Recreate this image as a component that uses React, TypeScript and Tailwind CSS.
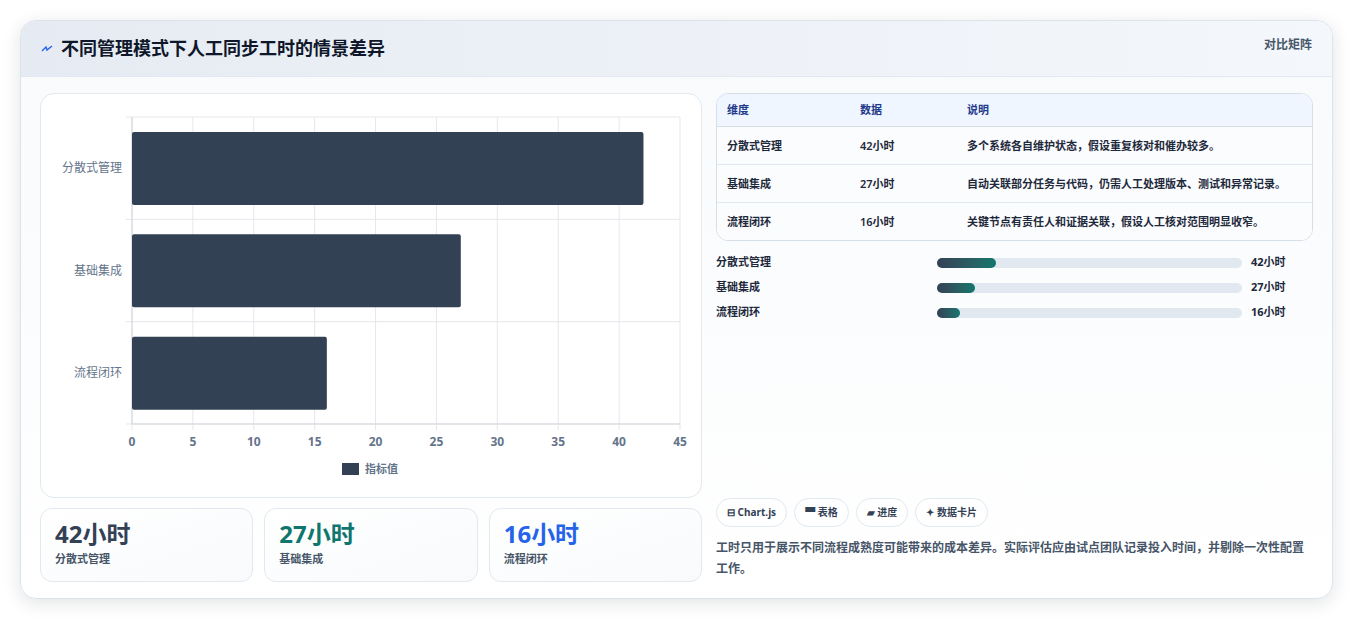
import React from "react";

const cats = [
  { name: "分散式管理", v: 42, desc: "多个系统各自维护状态，假设重复核对和催办较多。", w: 59 },
  { name: "基础集成", v: 27, desc: "自动关联部分任务与代码，仍需人工处理版本、测试和异常记录。", w: 38 },
  { name: "流程闭环", v: 16, desc: "关键节点有责任人和证据关联，假设人工核对范围明显收窄。", w: 23 },
];

function Chart() {
  const x0 = 91, x1 = 639, y0 = 23, y1 = 330;
  const sx = (x1 - x0) / 45;
  const band = (y1 - y0) / 3;
  return (
    <svg width="660" height="402" className="block">
      {Array.from({ length: 10 }).map((_, i) => (
        <line key={i} x1={x0 + i * 5 * sx} x2={x0 + i * 5 * sx} y1={y0} y2={y1 + 6} stroke="#e5e7eb" />
      ))}
      {[0, 1, 2, 3].map((i) => (
        <line key={i} x1={x0 - 6} x2={x1} y1={y0 + i * band} y2={y0 + i * band} stroke="#e5e7eb" />
      ))}
      <line x1={x0} x2={x0} y1={y0} y2={y1} stroke="#d1d5db" />
      <line x1={x0} x2={x1} y1={y1} y2={y1} stroke="#d1d5db" />
      {cats.map((c, i) => (
        <g key={c.name}>
          <rect x={x0} y={y0 + i * band + 15} width={c.v * sx} height={73} rx={2} fill="#334155" />
          <text x={x0 - 10} y={y0 + i * band + band / 2 + 4} textAnchor="end" fontSize="12" fill="#64748b">{c.name}</text>
        </g>
      ))}
      {Array.from({ length: 10 }).map((_, i) => (
        <text key={i} x={x0 + i * 5 * sx} y={352} textAnchor="middle" fontSize="12" fontWeight="bold" fill="#64748b">{i * 5}</text>
      ))}
      <rect x={301} y={369} width={17} height={12} fill="#334155" />
      <text x={324} y={379} fontSize="11" fontWeight="bold" fill="#64748b">指标值</text>
    </svg>
  );
}

export default function App() {
  return (
    <div className="w-[1354px] h-[621px] bg-white p-[20px] pb-0" style={{ fontFamily: '"Noto Sans", "Noto Sans CJK SC", sans-serif' }}>
      <div className="w-[1313px] h-[579px] rounded-[16px] border border-[#dbe3ec] bg-gradient-to-b from-[#f8fafc] to-white shadow-[0_4px_18px_rgba(15,23,42,0.12)] overflow-hidden">
        <div className="h-[56px] flex items-center justify-between px-[20px] bg-gradient-to-r from-[#e6ebf3] to-[#f4f7fb] border-b border-[#e2e8f0]">
          <div className="flex items-center gap-[8px]">
            <svg width="12" height="10" viewBox="0 0 12 10"><path d="M1 7 L5 3 L6 6 L11 2" stroke="#2563eb" strokeWidth="1.4" fill="none" /></svg>
            <span className="text-[18px] font-bold text-[#0f172a]">不同管理模式下人工同步工时的情景差异</span>
          </div>
          <span className="text-[12px] font-semibold text-[#475569] -mt-[8px]">对比矩阵</span>
        </div>
        <div className="flex gap-[14px] px-[19px] pt-[16px]">
          <div className="w-[663px] flex flex-col gap-[10px]">
            <div className="h-[405px] rounded-[14px] border border-[#e2e8f0] bg-white">
              <Chart />
            </div>
            <div className="grid grid-cols-3 gap-[11px]">
              {cats.map((c, i) => (
                <div key={c.name} className="h-[74px] rounded-[12px] border border-[#e2e8f0] bg-gradient-to-br from-white to-[#f8fafc] px-[14px] pt-[8px]">
                  <div className={"text-[24px] font-bold leading-[34px] " + ["text-[#334155]", "text-[#0f766e]", "text-[#2563eb]"][i]}>{c.v}小时</div>
                  <div className="text-[11px] font-semibold text-[#475569]">{c.name}</div>
                </div>
              ))}
            </div>
          </div>
          <div className="w-[598px] flex flex-col">
            <div className="rounded-[12px] border border-[#d6dee8] overflow-hidden bg-white text-[11px]">
              <div className="flex h-[33px] items-center bg-[#eff6ff] border-b border-[#d6dee8] font-bold text-[#1e3a8a]">
                <div className="w-[143px] pl-[10px]">维度</div><div className="w-[107px]">数据</div><div>说明</div>
              </div>
              {cats.map((c, i) => (
                <div key={c.name} className={"flex py-[10px] font-semibold text-[#1e293b] leading-[17px] bg-[#fbfcfe] " + (i < 2 ? "border-b border-[#e2e8f0]" : "")}>
                  <div className="w-[143px] pl-[10px] shrink-0">{c.name}</div>
                  <div className="w-[107px] shrink-0">{c.v}小时</div>
                  <div className="pr-[8px]">{c.desc}</div>
                </div>
              ))}
            </div>
            <div className="flex flex-col gap-[8px] mt-[13px]">
              {cats.map((c) => (
                <div key={c.name} className="flex items-center h-[17px] text-[11px] font-semibold text-[#1e293b]">
                  <div className="w-[221px]">{c.name}</div>
                  <div className="w-[305px] h-[10px] rounded-full bg-[#e2e8f0]">
                    <div className="h-[10px] rounded-full bg-gradient-to-r from-[#334155] to-[#0f766e]" style={{ width: c.w }} />
                  </div>
                  <div className="ml-[9px] font-bold">{c.v}小时</div>
                </div>
              ))}
            </div>
            <div className="flex gap-[7px] mt-[177px]">
              {["⊟ Chart.js", "▀ 表格", "▰ 进度", "✦ 数据卡片"].map((t) => (
                <div key={t} className="h-[29px] px-[10px] flex items-center rounded-full border border-[#e2e8f0] bg-white text-[10px] font-bold text-[#334155]">{t}</div>
              ))}
            </div>
            <p className="mt-[10px] text-[12px] leading-[21px] font-semibold text-[#475569]">工时只用于展示不同流程成熟度可能带来的成本差异。实际评估应由试点团队记录投入时间，并剔除一次性配置工作。</p>
          </div>
        </div>
      </div>
    </div>
  );
}
